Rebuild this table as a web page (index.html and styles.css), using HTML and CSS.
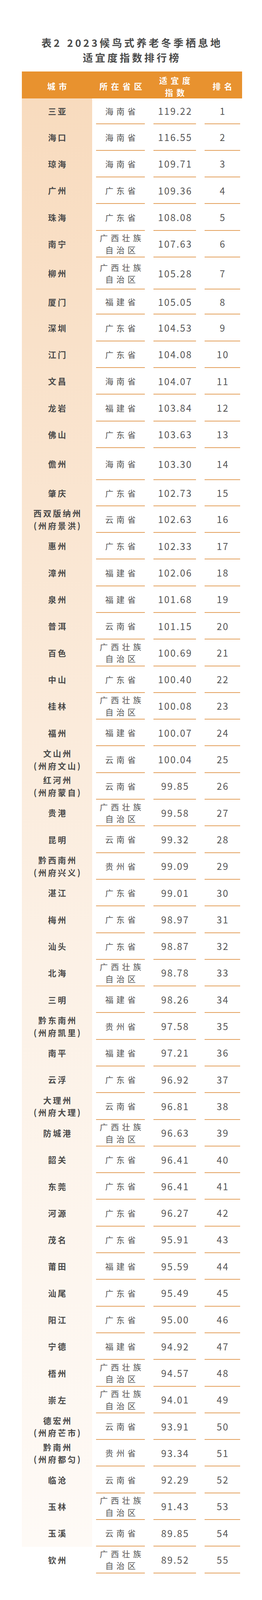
FILE: index.html
```html
<!DOCTYPE html>
<html lang="zh-CN">
<head>
<meta charset="utf-8">
<title>表2 2023候鸟式养老冬季栖息地适宜度指数排行榜</title>
<link rel="stylesheet" href="styles.css">
</head>
<body>
<div class="page">
  <h1 class="title">表2 2023候鸟式养老冬季栖息地<br>适宜度指数排行榜</h1>
  <div class="table">
    <div class="head">
      <div class="hc hc--city">城市</div>
      <div class="hc">所在省区</div>
      <div class="hc hc--two">适宜度<br>指数</div>
      <div class="hc">排名</div>
    </div>
    <div class="body">
      <div class="row row--first"><div class="c city">三亚</div><div class="c prov">海南省</div><div class="c num">119.22</div><div class="c rank">1</div></div>
      <div class="row"><div class="c city">海口</div><div class="c prov">海南省</div><div class="c num">116.55</div><div class="c rank">2</div></div>
      <div class="row"><div class="c city">琼海</div><div class="c prov">海南省</div><div class="c num">109.71</div><div class="c rank">3</div></div>
      <div class="row"><div class="c city">广州</div><div class="c prov">广东省</div><div class="c num">109.36</div><div class="c rank">4</div></div>
      <div class="row"><div class="c city">珠海</div><div class="c prov">广东省</div><div class="c num">108.08</div><div class="c rank">5</div></div>
      <div class="row"><div class="c city">南宁</div><div class="c prov prov--two">广西壮族<br>自治区</div><div class="c num">107.63</div><div class="c rank">6</div></div>
      <div class="row row--tall"><div class="c city">柳州</div><div class="c prov prov--two">广西壮族<br>自治区</div><div class="c num">105.28</div><div class="c rank">7</div></div>
      <div class="row row--short"><div class="c city">厦门</div><div class="c prov">福建省</div><div class="c num">105.05</div><div class="c rank">8</div></div>
      <div class="row"><div class="c city">深圳</div><div class="c prov">广东省</div><div class="c num">104.53</div><div class="c rank">9</div></div>
      <div class="row"><div class="c city">江门</div><div class="c prov">广东省</div><div class="c num">104.08</div><div class="c rank">10</div></div>
      <div class="row"><div class="c city">文昌</div><div class="c prov">海南省</div><div class="c num">104.07</div><div class="c rank">11</div></div>
      <div class="row"><div class="c city">龙岩</div><div class="c prov">福建省</div><div class="c num">103.84</div><div class="c rank">12</div></div>
      <div class="row"><div class="c city">佛山</div><div class="c prov">广东省</div><div class="c num">103.63</div><div class="c rank">13</div></div>
      <div class="row row--tall"><div class="c city">儋州</div><div class="c prov">海南省</div><div class="c num">103.30</div><div class="c rank">14</div></div>
      <div class="row row--mid"><div class="c city">肇庆</div><div class="c prov">广东省</div><div class="c num">102.73</div><div class="c rank">15</div></div>
      <div class="row"><div class="c city city--two">西双版纳州<br>(州府景洪)</div><div class="c prov">云南省</div><div class="c num">102.63</div><div class="c rank">16</div></div>
      <div class="row"><div class="c city">惠州</div><div class="c prov">广东省</div><div class="c num">102.33</div><div class="c rank">17</div></div>
      <div class="row"><div class="c city">漳州</div><div class="c prov">福建省</div><div class="c num">102.06</div><div class="c rank">18</div></div>
      <div class="row"><div class="c city">泉州</div><div class="c prov">福建省</div><div class="c num">101.68</div><div class="c rank">19</div></div>
      <div class="row"><div class="c city">普洱</div><div class="c prov">云南省</div><div class="c num">101.15</div><div class="c rank">20</div></div>
      <div class="row"><div class="c city">百色</div><div class="c prov prov--two">广西壮族<br>自治区</div><div class="c num">100.69</div><div class="c rank">21</div></div>
      <div class="row"><div class="c city">中山</div><div class="c prov">广东省</div><div class="c num">100.40</div><div class="c rank">22</div></div>
      <div class="row"><div class="c city">桂林</div><div class="c prov prov--two">广西壮族<br>自治区</div><div class="c num">100.08</div><div class="c rank">23</div></div>
      <div class="row"><div class="c city">福州</div><div class="c prov">福建省</div><div class="c num">100.07</div><div class="c rank">24</div></div>
      <div class="row"><div class="c city city--two">文山州<br>(州府文山)</div><div class="c prov">云南省</div><div class="c num">100.04</div><div class="c rank">25</div></div>
      <div class="row"><div class="c city city--two">红河州<br>(州府蒙自)</div><div class="c prov">云南省</div><div class="c num">99.85</div><div class="c rank">26</div></div>
      <div class="row"><div class="c city">贵港</div><div class="c prov prov--two">广西壮族<br>自治区</div><div class="c num">99.58</div><div class="c rank">27</div></div>
      <div class="row"><div class="c city">昆明</div><div class="c prov">云南省</div><div class="c num">99.32</div><div class="c rank">28</div></div>
      <div class="row"><div class="c city city--two">黔西南州<br>(州府兴义)</div><div class="c prov">贵州省</div><div class="c num">99.09</div><div class="c rank">29</div></div>
      <div class="row"><div class="c city">湛江</div><div class="c prov">广东省</div><div class="c num">99.01</div><div class="c rank">30</div></div>
      <div class="row"><div class="c city">梅州</div><div class="c prov">广东省</div><div class="c num">98.97</div><div class="c rank">31</div></div>
      <div class="row"><div class="c city">汕头</div><div class="c prov">广东省</div><div class="c num">98.87</div><div class="c rank">32</div></div>
      <div class="row"><div class="c city">北海</div><div class="c prov prov--two">广西壮族<br>自治区</div><div class="c num">98.78</div><div class="c rank">33</div></div>
      <div class="row"><div class="c city">三明</div><div class="c prov">福建省</div><div class="c num">98.26</div><div class="c rank">34</div></div>
      <div class="row"><div class="c city city--two">黔东南州<br>(州府凯里)</div><div class="c prov">贵州省</div><div class="c num">97.58</div><div class="c rank">35</div></div>
      <div class="row"><div class="c city">南平</div><div class="c prov">福建省</div><div class="c num">97.21</div><div class="c rank">36</div></div>
      <div class="row"><div class="c city">云浮</div><div class="c prov">广东省</div><div class="c num">96.92</div><div class="c rank">37</div></div>
      <div class="row"><div class="c city city--two">大理州<br>(州府大理)</div><div class="c prov">云南省</div><div class="c num">96.81</div><div class="c rank">38</div></div>
      <div class="row"><div class="c city">防城港</div><div class="c prov prov--two">广西壮族<br>自治区</div><div class="c num">96.63</div><div class="c rank">39</div></div>
      <div class="row"><div class="c city">韶关</div><div class="c prov">广东省</div><div class="c num">96.41</div><div class="c rank">40</div></div>
      <div class="row"><div class="c city">东莞</div><div class="c prov">广东省</div><div class="c num">96.41</div><div class="c rank">41</div></div>
      <div class="row"><div class="c city">河源</div><div class="c prov">广东省</div><div class="c num">96.27</div><div class="c rank">42</div></div>
      <div class="row"><div class="c city">茂名</div><div class="c prov">广东省</div><div class="c num">95.91</div><div class="c rank">43</div></div>
      <div class="row"><div class="c city">莆田</div><div class="c prov">福建省</div><div class="c num">95.59</div><div class="c rank">44</div></div>
      <div class="row"><div class="c city">汕尾</div><div class="c prov">广东省</div><div class="c num">95.49</div><div class="c rank">45</div></div>
      <div class="row"><div class="c city">阳江</div><div class="c prov">广东省</div><div class="c num">95.00</div><div class="c rank">46</div></div>
      <div class="row"><div class="c city">宁德</div><div class="c prov">福建省</div><div class="c num">94.92</div><div class="c rank">47</div></div>
      <div class="row"><div class="c city">梧州</div><div class="c prov prov--two">广西壮族<br>自治区</div><div class="c num">94.57</div><div class="c rank">48</div></div>
      <div class="row"><div class="c city">崇左</div><div class="c prov prov--two">广西壮族<br>自治区</div><div class="c num">94.01</div><div class="c rank">49</div></div>
      <div class="row"><div class="c city city--two">德宏州<br>(州府芒市)</div><div class="c prov">云南省</div><div class="c num">93.91</div><div class="c rank">50</div></div>
      <div class="row"><div class="c city city--two">黔南州<br>(州府都匀)</div><div class="c prov">贵州省</div><div class="c num">93.34</div><div class="c rank">51</div></div>
      <div class="row"><div class="c city">临沧</div><div class="c prov">云南省</div><div class="c num">92.29</div><div class="c rank">52</div></div>
      <div class="row"><div class="c city">玉林</div><div class="c prov prov--two">广西壮族<br>自治区</div><div class="c num">91.43</div><div class="c rank">53</div></div>
      <div class="row"><div class="c city">玉溪</div><div class="c prov">云南省</div><div class="c num">89.85</div><div class="c rank">54</div></div>
      <div class="row"><div class="c city">钦州</div><div class="c prov prov--two">广西壮族<br>自治区</div><div class="c num">89.52</div><div class="c rank">55</div></div>
    </div>
  </div>
</div>
</body>
</html>
```

FILE: styles.css
```css
* {
  box-sizing: border-box;
  margin: 0;
  padding: 0;
}

html, body {
  background: #ffffff;
}

body {
  font-family: "Noto Sans CJK SC", "Noto Sans", sans-serif;
  color: #555555;
}

.page {
  width: 671px;
  padding: 90px 0 40px;
}

.title {
  padding-left: 5px;
  text-align: center;
  font-size: 26px;
  font-weight: 700;
  line-height: 38px;
  letter-spacing: 5.5px;
  word-spacing: 2px;
  color: #4a4a4a;
}

.table {
  width: 564px;
  margin: 17px 0 0 56px;
}

.head,
.row {
  display: grid;
  grid-template-columns: 168px 125px 109px 91px;
  column-gap: 22px;
  padding-right: 5px;
}

.head {
  height: 69px;
  padding-top: 6px;
  align-items: center;
  background: #e8922f;
  color: #ffffff;
  font-weight: 700;
  font-size: 21px;
  line-height: 31px;
  letter-spacing: 8.5px;
}

.hc {
  padding-left: 8.5px;
  text-align: center;
  white-space: nowrap;
}

.hc--city {
  padding-left: 20.5px;
}

.body {
  background: linear-gradient(to bottom, #f8dbbe 0%, #fae6d2 30%, #fcf1e6 60%, #fefaf6 100%) 0 0 / 180px calc(100% - 68.3px) no-repeat;
}

.row {
  height: 68.3px;
}

.row--first { height: 65.5px; }
.row--tall { height: 82.5px; }
.row--short { height: 64px; }
.row--mid { height: 66.3px; }

.c {
  display: flex;
  align-items: center;
  justify-content: center;
  text-align: center;
  white-space: nowrap;
}

.city {
  padding-left: 16px;
  font-size: 21px;
  font-weight: 700;
  letter-spacing: 4px;
  line-height: 31.5px;
  color: #4a4a4a;
}

.prov,
.num,
.rank {
  border-bottom: 2px solid #e3a05c;
  color: #555555;
}

.prov {
  padding-left: 7.5px;
  font-size: 21px;
  letter-spacing: 7.5px;
}

.prov--two {
  line-height: 30.5px;
}

.num,
.rank {
  padding-left: 2.4px;
  font-size: 24px;
  letter-spacing: 2.4px;
}
```
